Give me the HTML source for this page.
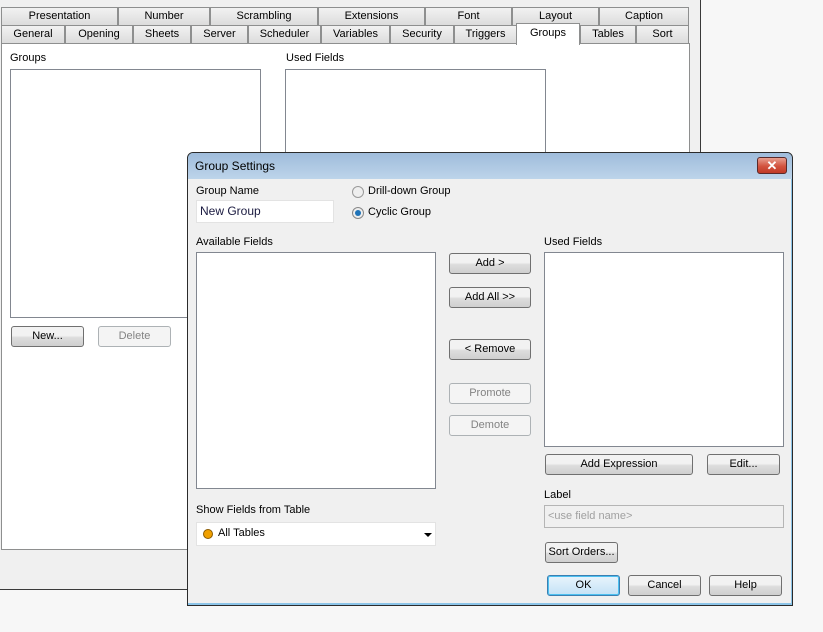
<!DOCTYPE html>
<html><head><style>
*{box-sizing:border-box;margin:0;padding:0}
body{width:823px;height:632px;background:#f7f7f7;font-family:"Liberation Sans",sans-serif;font-size:11px;color:#000;position:relative;overflow:hidden;white-space:nowrap}
.a{position:absolute}
.win{left:0;top:0;width:701px;height:590px;background:#f0f0f0;border-right:1px solid #3a3a3a;border-bottom:1px solid #3a3a3a}
.tab{position:absolute;height:18px;border:1px solid #8e8f8f;border-bottom:none;background:linear-gradient(#f2f2f2,#dcdcdc);text-align:center;line-height:17px}
.panel{left:1px;top:43px;width:689px;height:507px;background:#fff;border:1px solid #8e8f8f}
.box{position:absolute;background:#fff;border:1px solid #828790}
.btn{position:absolute;height:21px;border:1px solid #707070;border-radius:3px;background:linear-gradient(#f2f2f2 45%,#dddddd 55%,#cfcfcf);text-align:center;line-height:19px}
.dis{border-color:#adb2b5;background:#f4f4f4;color:#838383}
.lbl{position:absolute}
</style></head><body>
<div class="a win"></div>
<div class="tab" style="left:1px;top:7px;width:117px">Presentation</div>
<div class="tab" style="left:118px;top:7px;width:92px">Number</div>
<div class="tab" style="left:210px;top:7px;width:108px">Scrambling</div>
<div class="tab" style="left:318px;top:7px;width:107px">Extensions</div>
<div class="tab" style="left:425px;top:7px;width:87px">Font</div>
<div class="tab" style="left:512px;top:7px;width:87px">Layout</div>
<div class="tab" style="left:599px;top:7px;width:90px">Caption</div>
<div class="tab" style="left:1px;top:25px;width:64px">General</div>
<div class="tab" style="left:65px;top:25px;width:68px">Opening</div>
<div class="tab" style="left:133px;top:25px;width:58px">Sheets</div>
<div class="tab" style="left:191px;top:25px;width:57px">Server</div>
<div class="tab" style="left:248px;top:25px;width:73px">Scheduler</div>
<div class="tab" style="left:321px;top:25px;width:69px">Variables</div>
<div class="tab" style="left:390px;top:25px;width:64px">Security</div>
<div class="tab" style="left:454px;top:25px;width:63px">Triggers</div>
<div class="tab" style="left:580px;top:25px;width:56px">Tables</div>
<div class="tab" style="left:636px;top:25px;width:53px">Sort</div>
<div class="a panel"></div>
<div class="tab" style="left:516px;top:23px;width:64px;height:22px;background:#fff;line-height:19px;z-index:2">Groups</div>
<div class="lbl" style="left:10px;top:52px">Groups</div>
<div class="lbl" style="left:286px;top:52px">Used Fields</div>
<div class="box" style="left:10px;top:69px;width:251px;height:249px"></div>
<div class="box" style="left:285px;top:69px;width:261px;height:100px"></div>
<div class="btn" style="left:11px;top:326px;width:73px">New...</div>
<div class="btn dis" style="left:98px;top:326px;width:73px">Delete</div>

<!-- dialog -->
<div class="a" style="left:187px;top:152px;width:606px;height:454px;border:1px solid #2b2b2b;border-radius:6px 6px 0 0;background:#8cc4e8"></div>
<div class="a" style="left:188px;top:153px;width:604px;height:26px;border-radius:5px 5px 0 0;background:linear-gradient(#9fbcdb,#bdd4ea)"></div>
<div class="lbl" style="left:195px;top:159px;font-size:12px">Group Settings</div>
<div class="a" style="left:757px;top:157px;width:30px;height:17px;border:1px solid #5a2a2a;border-radius:3px;background:linear-gradient(#e8a090,#d2533f 55%,#c03a27);color:#fff;font-weight:bold;text-align:center;line-height:15px;font-size:13px">✕</div>
<div class="a" style="left:188px;top:179px;width:603px;height:424px;background:#f0f0f0"></div>
<div class="lbl" style="left:196px;top:185px">Group Name</div>
<div class="a" style="left:196px;top:200px;width:138px;height:23px;background:#fff;border:1px solid #e3e3e3;padding:3px 3px;font-size:12px;color:#1a1a40">New Group</div>
<div class="a" style="left:352px;top:186px;width:12px;height:12px;border-radius:50%;border:1px solid #999;background:#eee"></div>
<div class="lbl" style="left:368px;top:185px">Drill-down Group</div>
<div class="a" style="left:352px;top:207px;width:12px;height:12px;border-radius:50%;border:1px solid #888;background:#eee"></div>
<div class="a" style="left:355px;top:210px;width:6px;height:6px;border-radius:50%;background:#1f73b8"></div>
<div class="lbl" style="left:368px;top:206px">Cyclic Group</div>
<div class="lbl" style="left:196px;top:236px">Available Fields</div>
<div class="box" style="left:196px;top:252px;width:240px;height:237px"></div>
<div class="lbl" style="left:544px;top:236px">Used Fields</div>
<div class="box" style="left:544px;top:252px;width:240px;height:195px"></div>
<div class="btn" style="left:449px;top:253px;width:82px">Add &gt;</div>
<div class="btn" style="left:449px;top:287px;width:82px">Add All &gt;&gt;</div>
<div class="btn" style="left:449px;top:339px;width:82px">&lt; Remove</div>
<div class="btn dis" style="left:449px;top:383px;width:82px">Promote</div>
<div class="btn dis" style="left:449px;top:415px;width:82px">Demote</div>
<div class="btn" style="left:545px;top:454px;width:148px">Add Expression</div>
<div class="btn" style="left:707px;top:454px;width:73px">Edit...</div>
<div class="lbl" style="left:544px;top:489px">Label</div>
<div class="a" style="left:544px;top:505px;width:240px;height:23px;background:#f0f0f0;border:1px solid #b5b5b5;color:#a0a0a0;padding:4px 3px">&lt;use field name&gt;</div>
<div class="lbl" style="left:196px;top:504px">Show Fields from Table</div>
<div class="a" style="left:196px;top:522px;width:240px;height:24px;background:#fff;border:1px solid #e3e3e3"></div>
<div class="a" style="left:203px;top:529px;width:10px;height:10px;border-radius:50%;background:#f0a000;border:1px solid #8a5a00"></div>
<div class="lbl" style="left:218px;top:527px">All Tables</div>
<div class="a" style="left:424px;top:533px;width:0;height:0;border-left:4px solid transparent;border-right:4px solid transparent;border-top:4px solid #000"></div>
<div class="btn" style="left:545px;top:542px;width:73px">Sort Orders...</div>
<div class="btn" style="left:547px;top:575px;width:73px;border-color:#3c7fb1;background:linear-gradient(#e8f4fc,#c4e2f6);box-shadow:inset 0 0 0 1px #4cc0f0">OK</div>
<div class="btn" style="left:628px;top:575px;width:73px">Cancel</div>
<div class="btn" style="left:709px;top:575px;width:73px">Help</div>
</body></html>
